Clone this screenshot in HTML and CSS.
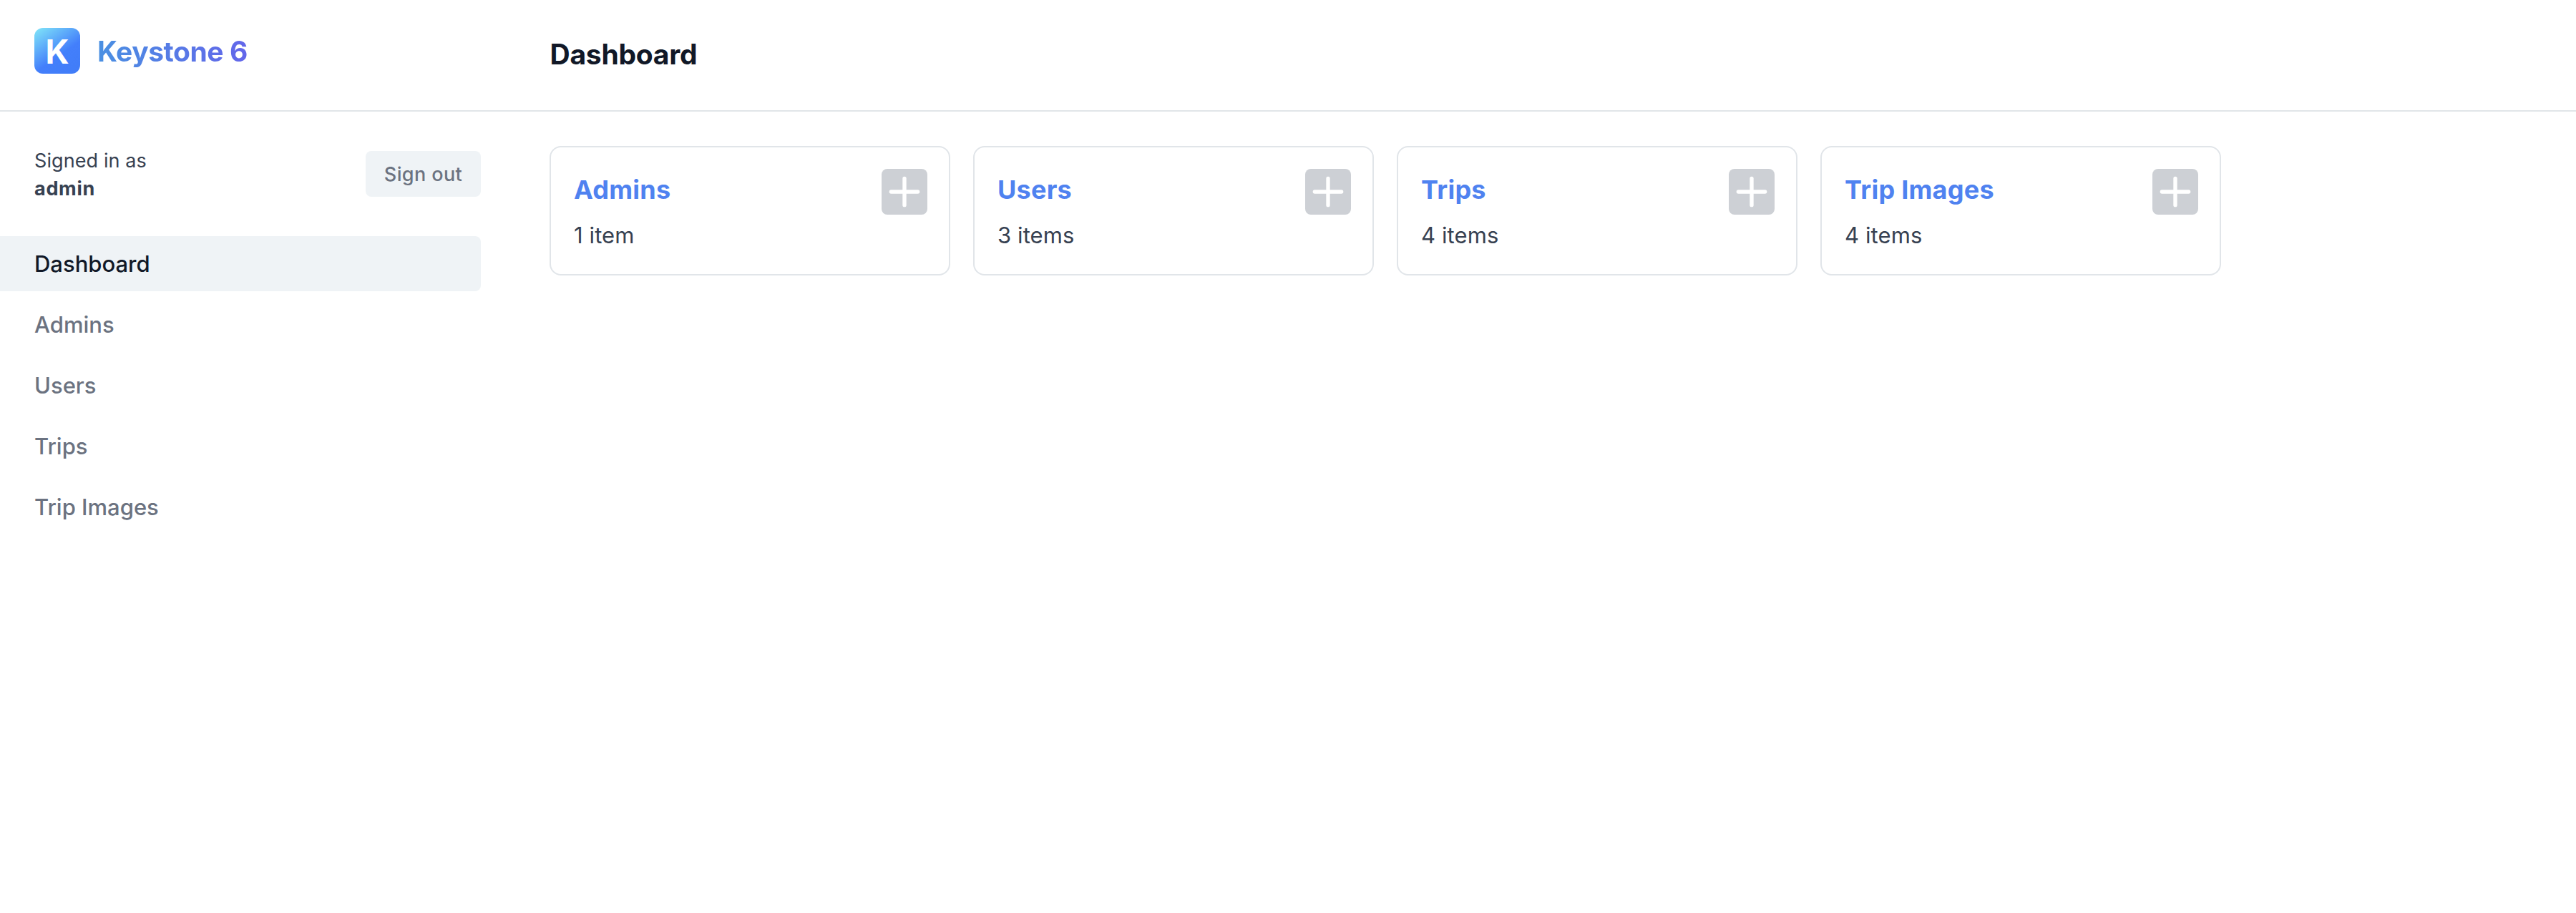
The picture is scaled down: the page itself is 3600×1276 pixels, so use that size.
FILE: index.html
```html
<!DOCTYPE html>
<html lang="en">
<head>
<meta charset="utf-8">
<title>Keystone 6</title>
<link rel="stylesheet" href="styles.css">
</head>
<body>
<header class="header">
  <a class="brand"><span class="logo">K</span><span class="brand-name">Keystone 6</span></a>
  <h1 class="page-title">Dashboard</h1>
</header>
<div class="layout">
  <aside class="sidebar">
    <div class="session">
      <div class="who"><span>Signed in as</span><strong>admin</strong></div>
      <button class="sign-out">Sign out</button>
    </div>
    <nav class="nav">
      <a class="nav-item active">Dashboard</a>
      <a class="nav-item">Admins</a>
      <a class="nav-item">Users</a>
      <a class="nav-item">Trips</a>
      <a class="nav-item">Trip Images</a>
    </nav>
  </aside>
  <main class="cards">
    <section class="card"><div><h2>Admins</h2><p>1 item</p></div><a class="add"><svg viewBox="0 0 24 24"><path d="M12 5v14M5 12h14"/></svg></a></section>
    <section class="card"><div><h2>Users</h2><p>3 items</p></div><a class="add"><svg viewBox="0 0 24 24"><path d="M12 5v14M5 12h14"/></svg></a></section>
    <section class="card"><div><h2>Trips</h2><p>4 items</p></div><a class="add"><svg viewBox="0 0 24 24"><path d="M12 5v14M5 12h14"/></svg></a></section>
    <section class="card"><div><h2>Trip Images</h2><p>4 items</p></div><a class="add"><svg viewBox="0 0 24 24"><path d="M12 5v14M5 12h14"/></svg></a></section>
  </main>
</div>
</body>
</html>
```
FILE: styles.css
```css
* { box-sizing: border-box; }
body {
  margin: 0;
  background: #fff;
  color: #374151;
  font-family: Inter, "Liberation Sans", sans-serif;
}
h1, h2, p { margin: 0; }
.header {
  display: grid;
  grid-template-columns: 768px 1fr;
  height: 156px;
  border-bottom: 2px solid #e1e5e9;
}
.brand {
  display: flex;
  align-items: center;
  gap: 24px;
  height: 64px;
  margin: 39px 0 0 48px;
}
.logo {
  display: flex;
  align-items: center;
  justify-content: center;
  width: 64px;
  height: 64px;
  padding-top: 2px;
  border-radius: 12px;
  background: linear-gradient(145deg, #7fe3f8 2%, #437ffb 58%, #407cf8 100%);
  color: #fff;
  font-size: 46px;
  font-weight: 700;
}
.brand-name {
  background: linear-gradient(to right, #4a90e2, #6366ea);
  background-clip: text;
  -webkit-background-clip: text;
  color: transparent;
  font-size: 39px;
  font-weight: 700;
  letter-spacing: -0.45px;
}
.page-title {
  margin-top: 52px;
  padding-left: 0.5px;
  color: #111827;
  font-size: 39px;
  line-height: 48px;
  font-weight: 700;
  letter-spacing: -0.25px;
}
.layout {
  display: grid;
  grid-template-columns: 672px 1fr;
  column-gap: 96px;
  padding-top: 48px;
}
.session {
  display: flex;
  justify-content: space-between;
  align-items: center;
  height: 78px;
  margin-left: 48px;
}
.who {
  display: flex;
  flex-direction: column;
  padding-top: 2px;
  font-size: 27px;
  line-height: 39px;
  letter-spacing: 0.1px;
}
.who strong { letter-spacing: 0.7px; }
.sign-out {
  width: 161px;
  height: 64px;
  padding: 2px 0 0;
  border: 0;
  border-radius: 8px;
  background: #eff3f6;
  color: #6b7280;
  font: 500 27px/62px Inter, "Liberation Sans", sans-serif;
  letter-spacing: 0.4px;
}
.nav {
  display: grid;
  gap: 8px;
  margin-top: 48px;
}
.nav-item {
  height: 77px;
  padding-left: 48px;
  border-radius: 0 8px 8px 0;
  color: #6b7280;
  font-size: 31px;
  line-height: 77px;
  font-weight: 500;
}
.nav-item.active {
  background: #eff3f6;
  color: #111827;
}
.cards {
  display: grid;
  grid-template-columns: repeat(4, 560px);
  gap: 32px;
  align-items: start;
}
.card {
  display: flex;
  justify-content: space-between;
  height: 181px;
  padding: 30px 30px 30px 32px;
  border: 2px solid #e1e5e9;
  border-radius: 16px;
}
.card h2 {
  color: #4f82f0;
  font-size: 36px;
  line-height: 58px;
  font-weight: 700;
  letter-spacing: 0.25px;
}
.card p {
  margin-top: 11px;
  font-size: 31px;
  line-height: 48px;
  letter-spacing: 0.1px;
}
.add {
  width: 64px;
  height: 64px;
  border-radius: 8px;
  background: #cdd0d5;
}
.add svg {
  display: block;
  width: 64px;
  height: 64px;
  fill: none;
  stroke: #fff;
  stroke-width: 2;
  stroke-linecap: round;
}
```
